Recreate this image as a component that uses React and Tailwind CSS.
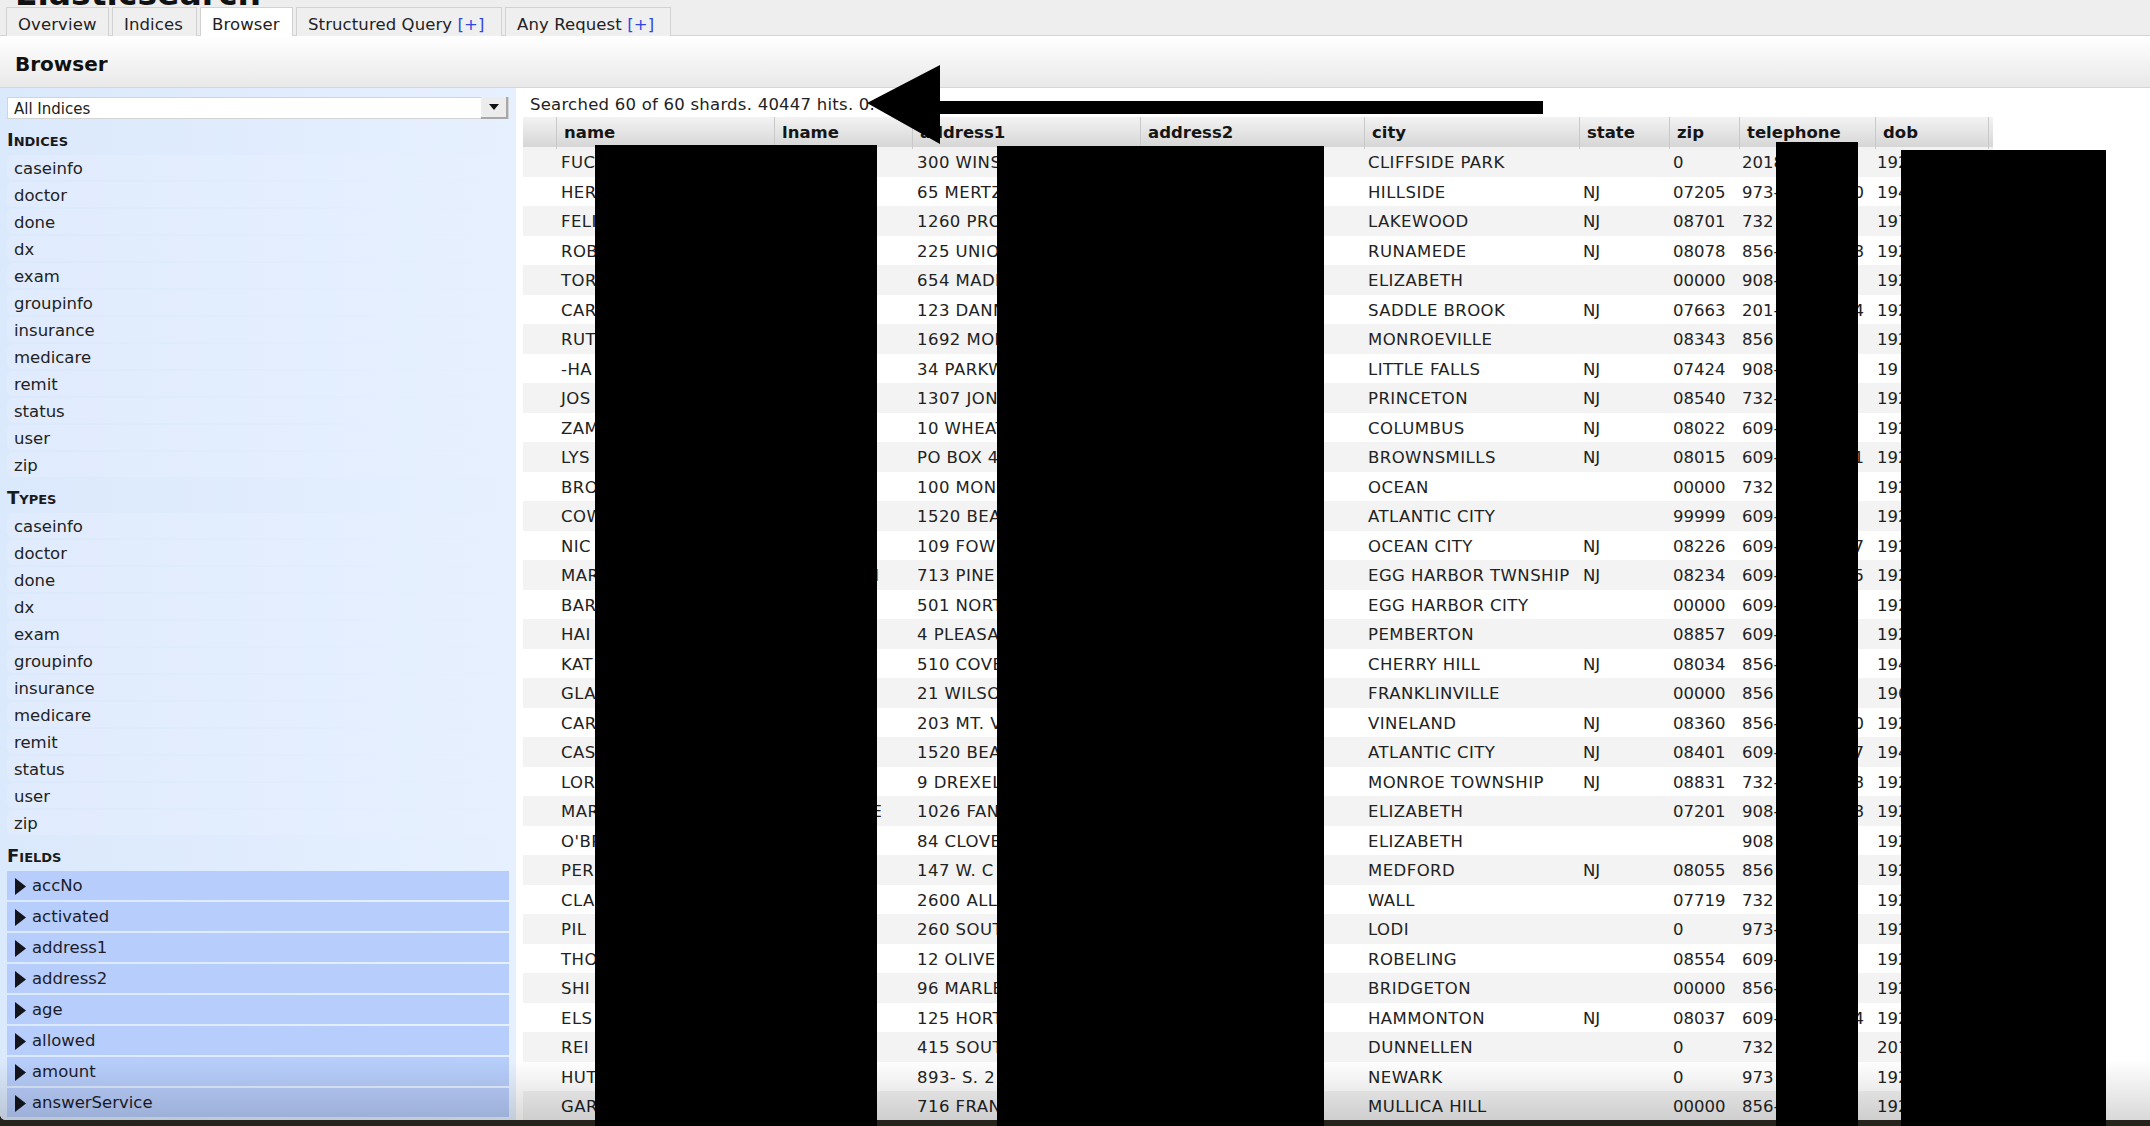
const FONT = "font-['DejaVu_Sans',Verdana,sans-serif]";

const TABS = [
  { label: 'Overview', w: 'w-[103px]' },
  { label: 'Indices', w: 'w-[85px]' },
  { label: 'Browser', w: 'w-[93px]', active: true },
  { label: 'Structured Query', plus: true, w: 'w-[206px]' },
  { label: 'Any Request', plus: true, w: 'w-[166px]' },
];

const NAMES = ['caseinfo', 'doctor', 'done', 'dx', 'exam', 'groupinfo', 'insurance', 'medicare', 'remit', 'status', 'user', 'zip'];
const FIELDS = ['accNo', 'activated', 'address1', 'address2', 'age', 'allowed', 'amount', 'answerService'];

const COLS = ['name', 'lname', 'address1', 'address2', 'city', 'state', 'zip', 'telephone', 'dob'];
const GRID = 'grid grid-cols-[33px_218px_138px_228px_224px_215px_90px_70px_136px_113px_5px]';

// name, address, city, state, zip, telephone start, telephone end digit, dob
const ROWS = [
  ['FUC', '300 WINS', 'CLIFFSIDE PARK', '', '0', '2018', '', '192'],
  ['HER', '65 MERTZ', 'HILLSIDE', 'NJ', '07205', '973-', '0', '194'],
  ['FELI', '1260 PRO', 'LAKEWOOD', 'NJ', '08701', '732', '', '197'],
  ['ROB', '225 UNIO', 'RUNAMEDE', 'NJ', '08078', '856-', '8', '192'],
  ['TOR', '654 MADI', 'ELIZABETH', '', '00000', '908-', '', '192'],
  ['CAR', '123 DANN', 'SADDLE BROOK', 'NJ', '07663', '201-', '4', '192'],
  ['RUT', '1692 MON', 'MONROEVILLE', '', '08343', '856', '', '192'],
  ['-HA', '34 PARKW', 'LITTLE FALLS', 'NJ', '07424', '908-', '', '19'],
  ['JOS', '1307 JON', 'PRINCETON', 'NJ', '08540', '732-', '', '192'],
  ['ZAM', '10 WHEAT', 'COLUMBUS', 'NJ', '08022', '609-', '', '192'],
  ['LYS', 'PO BOX 4', 'BROWNSMILLS', 'NJ', '08015', '609-', '1', '192'],
  ['BRO', '100 MON', 'OCEAN', '', '00000', '732', '', '192'],
  ['COW', '1520 BEA', 'ATLANTIC CITY', '', '99999', '609-', '', '192'],
  ['NIC', '109 FOWL', 'OCEAN CITY', 'NJ', '08226', '609-', '7', '192'],
  ['MAR', '713 PINE', 'EGG HARBOR TWNSHIP', 'NJ', '08234', '609-', '5', '192'],
  ['BAR', '501 NORT', 'EGG HARBOR CITY', '', '00000', '609-', '', '192'],
  ['HAI', '4 PLEASA', 'PEMBERTON', '', '08857', '609-', '', '192'],
  ['KAT', '510 COVE', 'CHERRY HILL', 'NJ', '08034', '856-', '', '194'],
  ['GLA', '21 WILSO', 'FRANKLINVILLE', '', '00000', '856', '', '196'],
  ['CAR', '203 MT. V', 'VINELAND', 'NJ', '08360', '856-', '0', '192'],
  ['CAS', '1520 BEA', 'ATLANTIC CITY', 'NJ', '08401', '609-', '7', '194'],
  ['LOR', '9 DREXEL', 'MONROE TOWNSHIP', 'NJ', '08831', '732-', '8', '192'],
  ['MAR', '1026 FAN', 'ELIZABETH', '', '07201', '908-', '8', '192'],
  ["O'BR", '84 CLOVE', 'ELIZABETH', '', '', '908', '', '192'],
  ['PER', '147 W. C', 'MEDFORD', 'NJ', '08055', '856', '', '192'],
  ['CLA', '2600 ALL', 'WALL', '', '07719', '732', '', '192'],
  ['PIL', '260 SOUT', 'LODI', '', '0', '973-', '', '192'],
  ['THO', '12 OLIVE', 'ROBELING', '', '08554', '609-', '', '192'],
  ['SHI', '96 MARLE', 'BRIDGETON', '', '00000', '856-', '', '192'],
  ['ELS', '125 HORT', 'HAMMONTON', 'NJ', '08037', '609-', '4', '192'],
  ['REI', '415 SOUT', 'DUNNELLEN', '', '0', '732', '', '201'],
  ['HUT', '893- S. 2', 'NEWARK', '', '0', '973', '', '192'],
  ['GAR', '716 FRAN', 'MULLICA HILL', '', '00000', '856-', '', '192'],
];

function Tabs() {
  return (
    <div className="flex h-[29px] gap-[3px] border-b border-[#d4d4d4] pl-[6px]">
      {TABS.map(t => (
        <div
          key={t.label}
          className={`${t.w} h-[29px] whitespace-nowrap border border-b-0 border-[#d2d2d2] pl-[11px] text-[16.5px] leading-[33px] tracking-[0.1px] text-[#222] ${t.active ? 'bg-white' : 'bg-[#efefef]'}`}
        >
          {t.label}
          {t.plus && <span className="text-[#3347e0]"> [+]</span>}
        </div>
      ))}
    </div>
  );
}

function SectionTitle({ children }) {
  return <div className="flex h-[36px] items-center pt-[4px] text-[18px] font-bold text-[#1a1a1a] [font-variant:small-caps]">{children}</div>;
}

function NameList({ title }) {
  return (
    <>
      <SectionTitle>{title}</SectionTitle>
      <div className="flex flex-col gap-[2px]">
        {NAMES.map(n => (
          <div key={n} className="h-[25px] rounded-l-md bg-linear-to-r from-[#e0ebfd] to-[#e6f0ff] pl-[7px] text-[16.5px] leading-[27px] text-[#222]">{n}</div>
        ))}
      </div>
    </>
  );
}

function Sidebar() {
  return (
    <div className="w-[516px] shrink-0 bg-linear-to-r from-[#dbe9fc] to-[#e6f0ff] pl-[7px] pr-[7px] pt-[9px]">
      <div className="flex h-[22px] items-center justify-between border border-[#d4d4d4] bg-white pl-[6px] text-[15px] text-[#222]">
        <span className="pt-[2px]">All Indices</span>
        <div className="flex h-[22px] w-[27px] items-center justify-center border-b-2 border-r-2 border-[#a8a8a8] bg-[#ececec]">
          <svg width="10" height="6" viewBox="0 0 10 6"><path d="M0 0h10L5 6z" fill="#111" /></svg>
        </div>
      </div>
      <NameList title="Indices" />
      <NameList title="Types" />
      <SectionTitle>Fields</SectionTitle>
      <div className="flex flex-col gap-[2px]">
        {FIELDS.map(f => (
          <div key={f} className="flex h-[29px] items-center bg-[#b7cdfb] pl-[8px] text-[16.5px] text-[#1c1c2a]">
            <svg width="11" height="17" viewBox="0 0 11 17" className="mr-[6px] mt-px shrink-0"><path d="M0 0l11 8.5L0 17z" fill="#14141c" /></svg>
            <span className="pt-[2px]">{f}</span>
          </div>
        ))}
      </div>
    </div>
  );
}

function Cell({ children, pl = 'pl-[4px]', caps }) {
  return <div className={`${pl} ${caps ? 'tracking-[0.45px]' : ''} overflow-visible whitespace-nowrap`}>{children}</div>;
}

function ResultTable() {
  return (
    <div className="w-[1470px]">
      <div className={`${GRID} h-[30px] bg-linear-to-b from-[#f3f3f3] to-[#d6d6d6] text-[16.5px] font-bold leading-[32px] text-[#151515]`}>
        <div />
        {COLS.map(c => (
          <div key={c} className="border-l border-[#c9c9c9] pl-[7px]">{c}</div>
        ))}
        <div className="border-l border-[#c9c9c9]" />
      </div>
      {ROWS.map((r, i) => (
        <div key={i} className={`${GRID} h-[29.5px] text-[16.5px] leading-[31px] text-[#222] ${i % 2 === 0 ? 'bg-[#f3f3f3]' : 'bg-white'}`}>
          <div />
          <Cell pl="pl-[5px]" caps>{r[0]}</Cell>
          <div className="flex justify-end pr-[30px]">
            {i === 22 && 'E'}
            {i === 14 && <span className="pr-[3px] text-[#2a5db0]">l</span>}
          </div>
          <Cell pl="pl-[5px]" caps>{r[1]}</Cell>
          <div />
          <Cell caps>{r[2]}</Cell>
          <Cell>{r[3]}</Cell>
          <Cell>{r[4]}</Cell>
          <div className="flex justify-between pl-[3px] pr-[11px]"><span>{r[5]}</span><span>{r[6]}</span></div>
          <Cell pl="pl-[2px]">{r[7]}</Cell>
        </div>
      ))}
    </div>
  );
}

// redaction blocks and the arrow sit on top of the screenshot
function Markup() {
  return (
    <>
      <div className="absolute left-[595px] top-[145px] h-[981px] w-[282px] bg-black" />
      <div className="absolute left-[997px] top-[146px] h-[980px] w-[327px] bg-black" />
      <div className="absolute left-[1776px] top-[142px] h-[984px] w-[82px] bg-black" />
      <div className="absolute left-[1901px] top-[150px] h-[976px] w-[205px] bg-black" />
      <svg className="absolute left-[860px] top-[60px]" width="690" height="85" viewBox="0 0 690 85">
        <path d="M7 43L80 5v36h603v13H80v30z" fill="#000" />
      </svg>
    </>
  );
}

export default function App() {
  return (
    <div className={`${FONT} relative h-[1126px] w-[2150px] overflow-hidden bg-[#26231d]`}>
      <div className="relative flex h-[1120px] flex-col overflow-hidden rounded-bl-md bg-white">
        <div className="bg-[#eeeeee]">
          <div className="flex h-[7px] items-end overflow-hidden pl-[15px]">
            <div className="mb-[-3px] text-[33px] font-bold leading-none text-[#111]">Elasticsearch</div>
          </div>
          <Tabs />
        </div>
        <div className="flex h-[52px] items-center border-b border-[#d6d6d6] bg-linear-to-b from-white to-[#e9e9e9] pl-[15px] pt-[4px] text-[20px] font-bold text-[#111]">Browser</div>
        <div className="flex min-h-0 flex-1">
          <Sidebar />
          <div className="min-w-0 flex-1 pl-[7px]">
            <div className="h-[29px] whitespace-nowrap pl-[7px] text-[16.5px] leading-[33px] tracking-[0.24px] text-[#222]">Searched 60 of 60 shards. 40447 hits. 0.</div>
            <ResultTable />
          </div>
        </div>
        <div className="pointer-events-none absolute inset-x-0 bottom-0 h-[60px] bg-linear-to-b from-transparent to-black/15" />
      </div>
      <Markup />
    </div>
  );
}
